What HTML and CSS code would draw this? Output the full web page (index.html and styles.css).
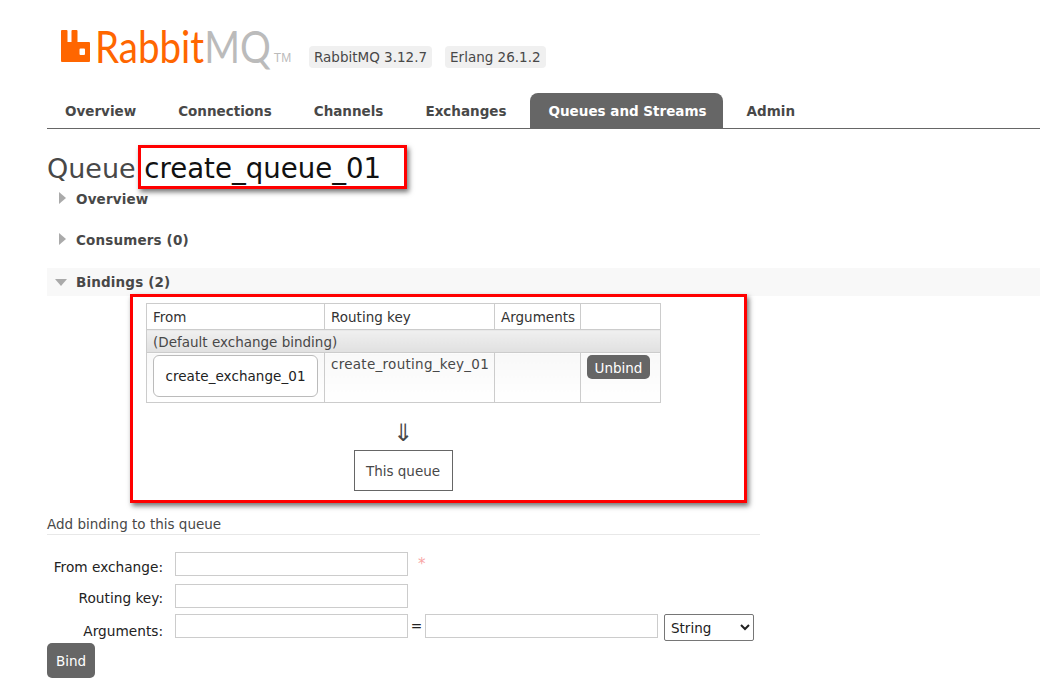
FILE: index.html
```html
<!DOCTYPE html>
<html lang="en">
<head>
<meta charset="utf-8">
<title>RabbitMQ Management</title>
<link rel="stylesheet" href="styles.css">
</head>
<body>
<header class="header">
  <div class="logo">
    <svg class="logo-icon" width="29" height="32" viewBox="0 0 29 32"><path fill="#f60" fill-rule="evenodd" d="M1 0h4.500a1 1 0 0 1 1 1v11h4V1a1 1 0 0 1 1-1h4a1 1 0 0 1 1 1v11h11.500a1 1 0 0 1 1 1v18a1 1 0 0 1-1 1H1a1 1 0 0 1-1-1V1a1 1 0 0 1 1-1zM18.500 19.500v4.500a1 1 0 0 0 1 1h3.500a1 1 0 0 0 1-1v-4.500a1 1 0 0 0-1-1h-3.500a1 1 0 0 0-1 1z"/></svg>
    <span class="logo-word"><span class="logo-rabbit">Rabbit</span><span class="logo-mq">MQ</span></span><span class="logo-tm">TM</span>
  </div>
  <div class="versions">
    <span class="chip">RabbitMQ 3.12.7</span>
    <span class="chip">Erlang 26.1.2</span>
  </div>
</header>
<nav class="nav">
  <a class="tab">Overview</a>
  <a class="tab">Connections</a>
  <a class="tab">Channels</a>
  <a class="tab">Exchanges</a>
  <a class="tab tab-active">Queues and Streams</a>
  <a class="tab">Admin</a>
</nav>
<main class="main">
  <h1 class="title">Queue <b class="queue-name">create_queue_01</b></h1>
  <h2 class="section section-overview"><span class="arrow-right"></span>Overview</h2>
  <h2 class="section section-consumers"><span class="arrow-right"></span>Consumers (0)</h2>
  <h2 class="section section-open"><span class="arrow-down"></span>Bindings (2)</h2>
  <div class="bindings">
    <table class="table">
      <thead>
        <tr><th class="c1">From</th><th class="c2">Routing key</th><th class="c3">Arguments</th><th class="c4"></th></tr>
      </thead>
      <tbody>
        <tr class="group"><td colspan="4">(Default exchange binding)</td></tr>
        <tr class="row">
          <td><span class="exchange">create_exchange_01</span></td>
          <td class="routing">create_routing_key_01</td>
          <td></td>
          <td><button class="btn unbind" type="button">Unbind</button></td>
        </tr>
      </tbody>
    </table>
    <div class="flow">
      <div class="flow-arrow">⇓</div>
      <div class="this-queue">This queue</div>
    </div>
  </div>
  <h3 class="add-title">Add binding to this queue</h3>
  <form class="form">
    <label class="lbl lbl-a">From exchange:</label>
    <div class="field field-a"><input class="input" type="text"><span class="req">*</span></div>
    <label class="lbl lbl-b">Routing key:</label>
    <div class="field field-b"><input class="input" type="text"></div>
    <label class="lbl lbl-c">Arguments:</label>
    <div class="field field-c"><input class="input" type="text"><span class="eq">=</span><input class="input" type="text"><select class="select"><option>String</option></select></div>
  </form>
  <button class="btn bind" type="button">Bind</button>
</main>
<div class="mark mark-title"></div>
<div class="mark mark-table"></div>
</body>
</html>
```
FILE: styles.css
```css
* { box-sizing: border-box; }
html, body { margin: 0; padding: 0; }
body {
  width: 1040px;
  height: 698px;
  overflow: hidden;
  background: #fff;
  color: #484848;
  font-family: "DejaVu Sans", sans-serif;
  font-size: 13.5px;
  position: relative;
}
.header {
  display: flex;
  align-items: flex-start;
  height: 93px;
  padding: 30px 0 0 61px;
}
.logo { display: flex; align-items: flex-start; width: 248px; flex: none; }
.logo-icon { flex: none; margin-right: 5px; }
.logo-word {
  display: inline-block;
  font-family: "Lato", sans-serif;
  font-weight: 400;
  font-size: 44px;
  line-height: 32px;
  white-space: nowrap;
  transform: scaleX(.875);
  transform-origin: left top;
  margin-right: -26px;
}
.logo-rabbit { color: #f60; }
.logo-mq { color: #bbb; }
.logo-tm {
  font-family: "Liberation Sans", sans-serif;
  color: #bbb;
  font-size: 12px;
  line-height: 12px;
  margin: 22px 0 0 4px;
}
.versions { display: flex; gap: 13px; margin-top: 16px; }
.chip {
  background: #f0f0f0;
  border-radius: 4px;
  color: #484848;
  height: 22px;
  line-height: 22px;
  padding: 0 5px;
  font-size: 13.5px;
}
.nav {
  display: flex;
  margin-left: 47px;
  height: 36px;
  border-bottom: 1px solid #666;
  align-items: flex-end;
  font-weight: 700;
  font-size: 13.5px;
}
.tab {
  display: block;
  height: 35px;
  line-height: 36px;
  padding: 0 18px;
  margin-right: 6px;
  color: #484848;
  white-space: nowrap;
}
.tab-active {
  background: #666;
  color: #fff;
  border-radius: 8px 8px 0 0;
  margin: 0 6px -1px -1px;
  padding: 0 16px 0 19px;
  height: 36px;
}
.main { margin-left: 47px; }
.title {
  margin: 0;
  padding-top: 24px;
  font-size: 27px;
  line-height: 32px;
  font-weight: 400;
  color: #484848;
}
.queue-name { font-weight: 400; color: #111; font-size: 27.6px; }
.section {
  margin: 0;
  font-size: 13.5px;
  font-weight: 700;
  letter-spacing: .15px;
  height: 28px;
  line-height: 28px;
  padding-left: 29px;
  position: relative;
  color: #484848;
}
.section-overview { margin-top: 2px; line-height: 24px; }
.section-consumers { margin-top: 13px; line-height: 24px; }
.section-open { margin-top: 12px; background: #f8f8f8; }
.arrow-right {
  position: absolute;
  left: 12px;
  top: 5px;
  border-style: solid;
  border-width: 6.5px 0 6.5px 7px;
  border-color: transparent transparent transparent #aaa;
}
.arrow-down {
  position: absolute;
  left: 8px;
  top: 11px;
  border-style: solid;
  border-width: 7px 6px 0 6px;
  border-color: #aaa transparent transparent transparent;
}
.bindings { padding: 7px 0 0 99px; }
.table {
  border-collapse: collapse;
  table-layout: fixed;
  width: 514px;
  font-size: 13.5px;
}
.table th, .table td {
  border: 1px solid #ccc;
  padding: 5px 6px 0;
  vertical-align: top;
  font-weight: 400;
  text-align: left;
  white-space: nowrap;
}
.table th { height: 26px; color: #333; line-height: 17px; }
.c1 { width: 178px; }
.c2 { width: 170px; }
.c3 { width: 86px; }
.c4 { width: 80px; }
.group td {
  height: 23px;
  background: linear-gradient(#f0f0f0, #e0e0e0);
  line-height: 17px;
}
.table .group td { padding-top: 4px; }
.row td {
  height: 50px;
  background: linear-gradient(#f8f8f8, #fff);
  line-height: 17px;
}
.table .row td { padding-top: 2px; }
.table .row .routing { padding-top: 3px; letter-spacing: .28px; }
.exchange {
  display: block;
  width: 165px;
  height: 42px;
  line-height: 40px;
  border: 1px solid #bbb;
  border-radius: 6px;
  background: #fff;
  color: #222;
  text-align: center;
  letter-spacing: .06px;
}
.btn {
  display: block;
  background: #666;
  color: #fff;
  border: 0;
  border-radius: 5px;
  font-family: "DejaVu Sans", sans-serif;
  font-size: 13.5px;
  padding: 0;
}
.unbind { width: 63px; height: 24px; padding-top: 2px; }
.flow {
  width: 514px;
  display: flex;
  flex-direction: column;
  align-items: center;
}
.flow-arrow {
  font-size: 24px;
  line-height: 28px;
  margin-top: 16px;
  color: #484848;
}
.this-queue {
  width: 99px;
  height: 41px;
  line-height: 41px;
  margin-top: 3px;
  border: 1px solid #666;
  text-align: center;
}
.add-title {
  margin: 23px 0 0;
  width: 713px;
  height: 21px;
  border-bottom: 1px solid #e8e8e8;
  font-size: 13.5px;
  font-weight: 400;
  line-height: 20px;
  color: #484848;
}
.form {
  display: grid;
  grid-template-columns: 116px auto;
  column-gap: 12px;
  align-items: start;
  color: #222;
  font-size: 13.7px;
  margin-top: 17px;
}
.lbl { text-align: right; white-space: nowrap; line-height: 17px; }
.lbl-a { padding-top: 7px; }
.lbl-b { padding-top: 6px; }
.lbl-c { padding-top: 9px; }
.field { display: flex; align-items: flex-start; }
.field-a { height: 32px; }
.field-b { height: 30px; }
.field-c { height: 29px; }
.input {
  width: 233px;
  height: 24px;
  border: 1px solid #ccc;
  background: #fff;
  padding: 0;
  margin: 0;
}
.req { color: #f8a5a5; margin-left: 10px; font-size: 15px; line-height: 24px; }
.eq { width: 17px; text-align: center; line-height: 25px; }
.select {
  width: 90px;
  height: 27px;
  margin-left: 6px;
  font-family: "DejaVu Sans", sans-serif;
  font-size: 13.5px;
  color: #222;
  background: #fff;
  border: 1px solid #767676;
  border-radius: 2px;
  padding-left: 2px;
}
.bind { width: 48px; height: 35px; }
.mark {
  position: absolute;
  border: 3px solid #f00;
  box-shadow: 2px 3px 5px rgba(0, 0, 0, .55);
  pointer-events: none;
}
.mark-title { left: 138px; top: 145px; width: 269px; height: 44px; }
.mark-table { left: 130px; top: 294px; width: 617px; height: 209px; }
```
